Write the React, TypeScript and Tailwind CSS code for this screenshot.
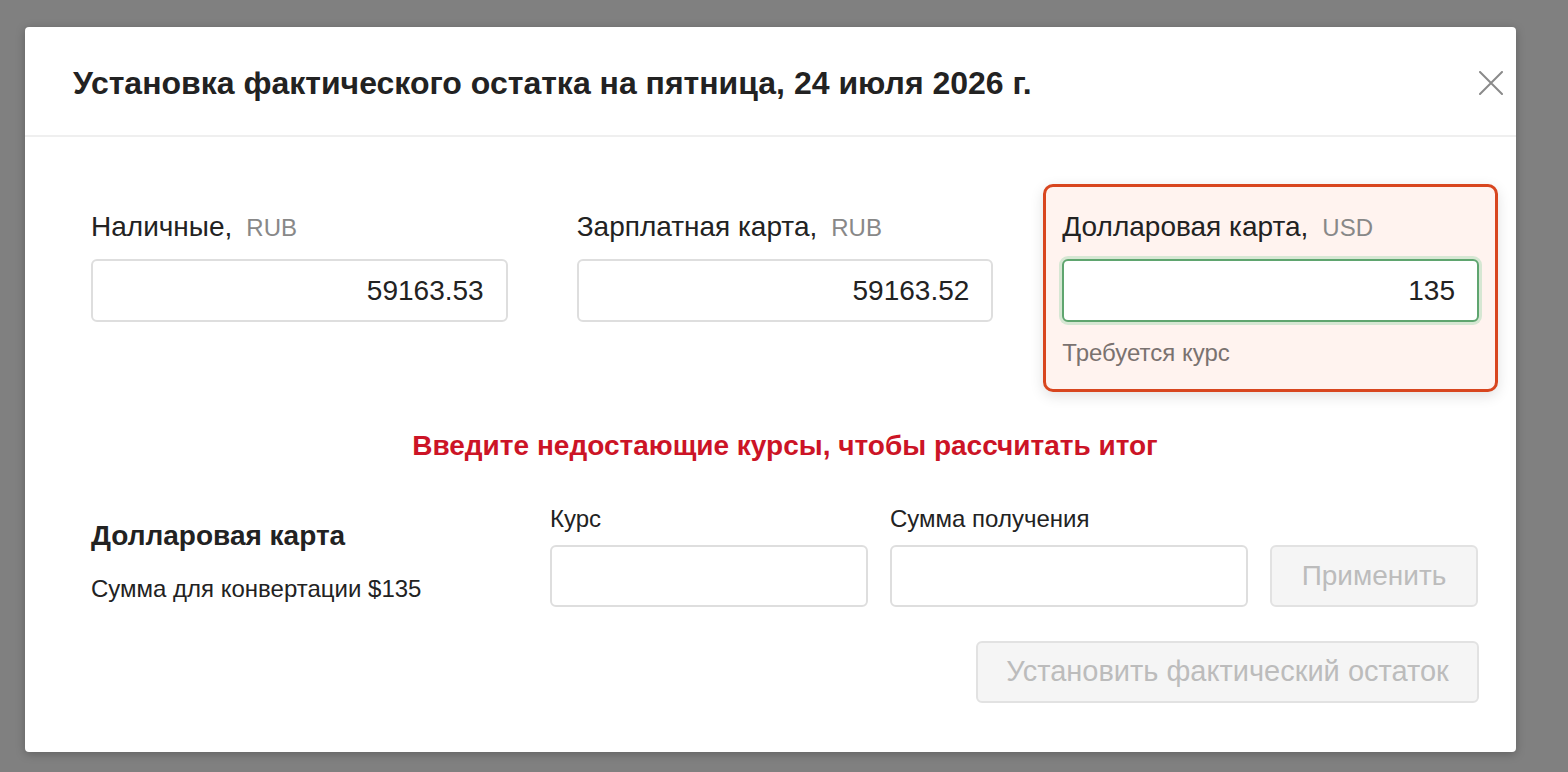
import React from 'react';

const font = { fontFamily: '"Liberation Sans", Arial, sans-serif' };

interface FieldProps {
    label: string;
    currency: string;
    value: string;
    warn?: boolean;
}

function BalanceField({ label, currency, value, warn }: FieldProps) {
    return (
        <div
            className={
                warn
                    ? "rounded-[10px] border-[3px] border-[#d8461f] bg-[#fff3ef] px-[16px] pt-[24px] pb-[23px] shadow-[0_4px_14px_rgba(0,0,0,0.12)]"
                    : "rounded-[10px] border-[3px] border-transparent px-[16px] pt-[24px] pb-[23px]"
            }
        >
            <div className="flex items-baseline gap-[14px] h-[32px] leading-[32px] mb-[16px]">
                <span className="text-[28px] text-[#222]">{label},</span>
                <span className="text-[24px] text-[#888]">{currency}</span>
            </div>
            <div
                className={
                    warn
                        ? "h-[63px] rounded-[6px] border-2 border-[#5fa56f] bg-white shadow-[0_0_0_3px_#d6e7d3] flex items-center justify-end px-[22px]"
                        : "h-[63px] rounded-[6px] border-2 border-[#dedede] bg-white flex items-center justify-end px-[22px]"
                }
            >
                <span className="text-[28px] text-[#222]">{value}</span>
            </div>
            {warn && (
                <div className="mt-[18px] h-[26px] leading-[26px] text-[24px] text-[#7a7270]">Требуется курс</div>
            )}
        </div>
    );
}

export default function App() {
    return (
        <div style={font} className="min-h-screen bg-[#808080] pl-[25px] pt-[27px]">
            <div className="w-[1491px] h-[725px] bg-white rounded-[4px] shadow-[0_2px_10px_rgba(0,0,0,0.25)]">
                {/* Header */}
                <div className="h-[110px] border-b-2 border-[#efefef] flex items-center justify-between pl-[48px] pr-[13px]">
                    <h2 className="mt-[4px] text-[32px] font-bold text-[#222]">
                        Установка фактического остатка на пятница, 24 июля 2026 г.
                    </h2>
                    <button className="w-[24px] h-[24px] mt-[4px]">
                        <svg viewBox="0 0 24 24" className="w-[24px] h-[24px]" fill="none" stroke="#8a8a8a" strokeWidth="2" strokeLinecap="round">
                            <path d="M1 1 L23 23 M23 1 L1 23" />
                        </svg>
                    </button>
                </div>

                {/* Body */}
                <div className="pl-[47px] pr-[18px] pt-[47px]">
                    <div className="grid grid-cols-3 gap-[31px] items-start">
                        <BalanceField label="Наличные" currency="RUB" value="59163.53" />
                        <BalanceField label="Зарплатная карта" currency="RUB" value="59163.52" />
                        <BalanceField label="Долларовая карта" currency="USD" value="135" warn />
                    </div>

                    <div className="mt-[38px] h-[32px] leading-[32px] text-center text-[28px] font-bold text-[#cc1426]">
                        Введите недостающие курсы, чтобы рассчитать итог
                    </div>

                    <div className="px-[19px] mt-[45px]">
                        <div className="flex">
                            <div className="w-[459px] pt-[13px]">
                                <div className="h-[32px] leading-[32px] text-[28px] font-bold text-[#222]">Долларовая карта</div>
                                <div className="mt-[23px] h-[28px] leading-[28px] text-[24px] text-[#222]">Сумма для конвертации $135</div>
                            </div>
                            <div className="w-[318px]">
                                <div className="h-[24px] leading-[24px] text-[24px] text-[#222] mb-[14px]">Курс</div>
                                <div className="h-[62px] rounded-[6px] border-2 border-[#dedede] bg-white" />
                            </div>
                            <div className="w-[358px] ml-[22px]">
                                <div className="h-[24px] leading-[24px] text-[24px] text-[#222] mb-[14px]">Сумма получения</div>
                                <div className="h-[62px] rounded-[6px] border-2 border-[#dedede] bg-white" />
                            </div>
                            <div className="w-[208px] ml-[22px] pt-[38px]">
                                <button className="w-full h-[62px] rounded-[6px] border-2 border-[#e2e2e2] bg-[#f5f5f5] text-[28px] text-[#bcbcbc]">
                                    Применить
                                </button>
                            </div>
                        </div>
                        <div className="flex justify-end mt-[34px]">
                            <button className="w-[503px] h-[62px] rounded-[6px] border-2 border-[#e2e2e2] bg-[#f5f5f5] text-[29px] text-[#bcbcbc]">
                                Установить фактический остаток
                            </button>
                        </div>
                    </div>
                </div>
            </div>
        </div>
    );
}
